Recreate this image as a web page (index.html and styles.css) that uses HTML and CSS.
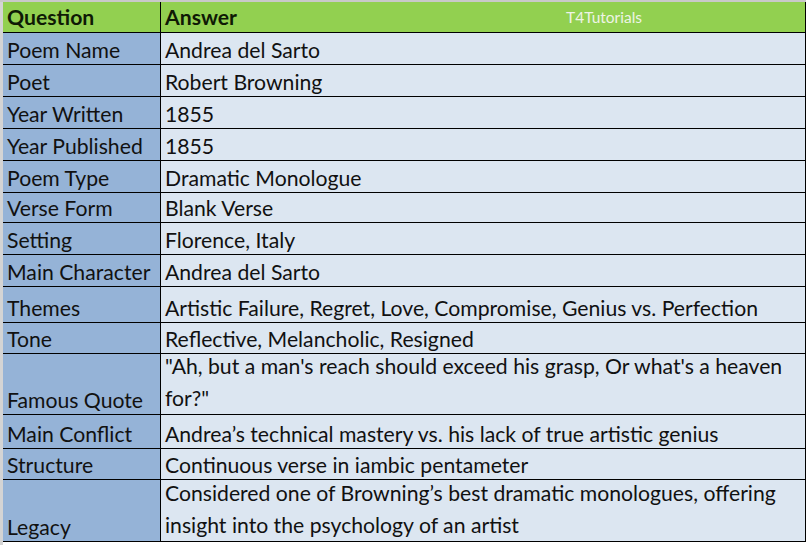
FILE: index.html
```html
<!DOCTYPE html>
<html>
<head>
<meta charset="utf-8">
<link rel="stylesheet" href="styles.css">
</head>
<body>
<div class="sheet">
  <div class="table">
    <div class="row head">
      <div class="q">Question</div>
      <div class="a">Answer<span class="mark">T4Tutorials</span></div>
    </div>
    <div class="row"><div class="q">Poem Name</div><div class="a">Andrea del Sarto</div></div>
    <div class="row"><div class="q">Poet</div><div class="a">Robert Browning</div></div>
    <div class="row"><div class="q">Year Written</div><div class="a">1855</div></div>
    <div class="row"><div class="q">Year Published</div><div class="a">1855</div></div>
    <div class="row"><div class="q">Poem Type</div><div class="a">Dramatic Monologue</div></div>
    <div class="row short"><div class="q">Verse Form</div><div class="a">Blank Verse</div></div>
    <div class="row"><div class="q">Setting</div><div class="a">Florence, Italy</div></div>
    <div class="row"><div class="q">Main Character</div><div class="a">Andrea del Sarto</div></div>
    <div class="row tall"><div class="q">Themes</div><div class="a">Artistic Failure, Regret, Love, Compromise, Genius vs. Perfection</div></div>
    <div class="row slim"><div class="q">Tone</div><div class="a">Reflective, Melancholic, Resigned</div></div>
    <div class="row double"><div class="q">Famous Quote</div><div class="a">"Ah, but a man's reach should exceed his grasp, Or what's a heaven for?"</div></div>
    <div class="row mid"><div class="q">Main Conflict</div><div class="a">Andrea’s technical mastery vs. his lack of true artistic genius</div></div>
    <div class="row slim"><div class="q">Structure</div><div class="a">Continuous verse in iambic pentameter</div></div>
    <div class="row double last"><div class="q">Legacy</div><div class="a">Considered one of Browning’s best dramatic monologues, offering insight into the psychology of an artist</div></div>
  </div>
</div>
</body>
</html>
```
FILE: styles.css
```css
html, body {
  margin: 0;
  padding: 0;
  background: #ffffff;
}
.sheet {
  width: 806px;
  padding-top: 2px;
  padding-left: 3px;
  background: linear-gradient(#c9c9c9, #c9c9c9) top left / 100% 2px no-repeat,
              linear-gradient(#d4d4d4, #d4d4d4) top left / 3px 100% no-repeat;
  height: 545px;
  box-sizing: border-box;
}
.table {
  width: 802px;
  font-family: Lato, "Open Sans", sans-serif;
  font-size: 21.2px;
  color: #111;
  border-right: 1px solid #000;
  border-bottom: 1px solid #000;
}
.row {
  display: grid;
  grid-template-columns: 158px 1fr;
  height: 32px;
  box-sizing: border-box;
  border-bottom: 1px solid #000;
}
.row.last { border-bottom: none; height: 62px; }
.row.short { height: 30px; }
.row.slim { height: 31px; }
.row.tall { height: 36px; }
.row.mid { height: 34px; }
.row.double { height: 61px; }
.head { height: 31px; }
.q, .a {
  display: flex;
  align-items: flex-end;
  padding: 0 3px 1px 4px;
  white-space: nowrap;
  overflow: hidden;
}
.q {
  background: #95b3d7;
  border-right: 1px solid #000;
}
.a {
  background: #dce6f1;
  padding-left: 4px;
}
.double .a {
  white-space: normal;
  line-height: 32px;
  padding-top: 0;
  padding-bottom: 0;
}
.double .q {
  padding-bottom: 1px;
}
.head .q, .head .a {
  background: #92d050;
  font-weight: bold;
  color: #0f1a05;
  padding-bottom: 2px;
}
.head .a {
  position: relative;
}
.mark {
  position: absolute;
  left: 405px;
  bottom: 6px;
  font-size: 15.5px;
  font-weight: normal;
  color: #eef4e6;
}
```
